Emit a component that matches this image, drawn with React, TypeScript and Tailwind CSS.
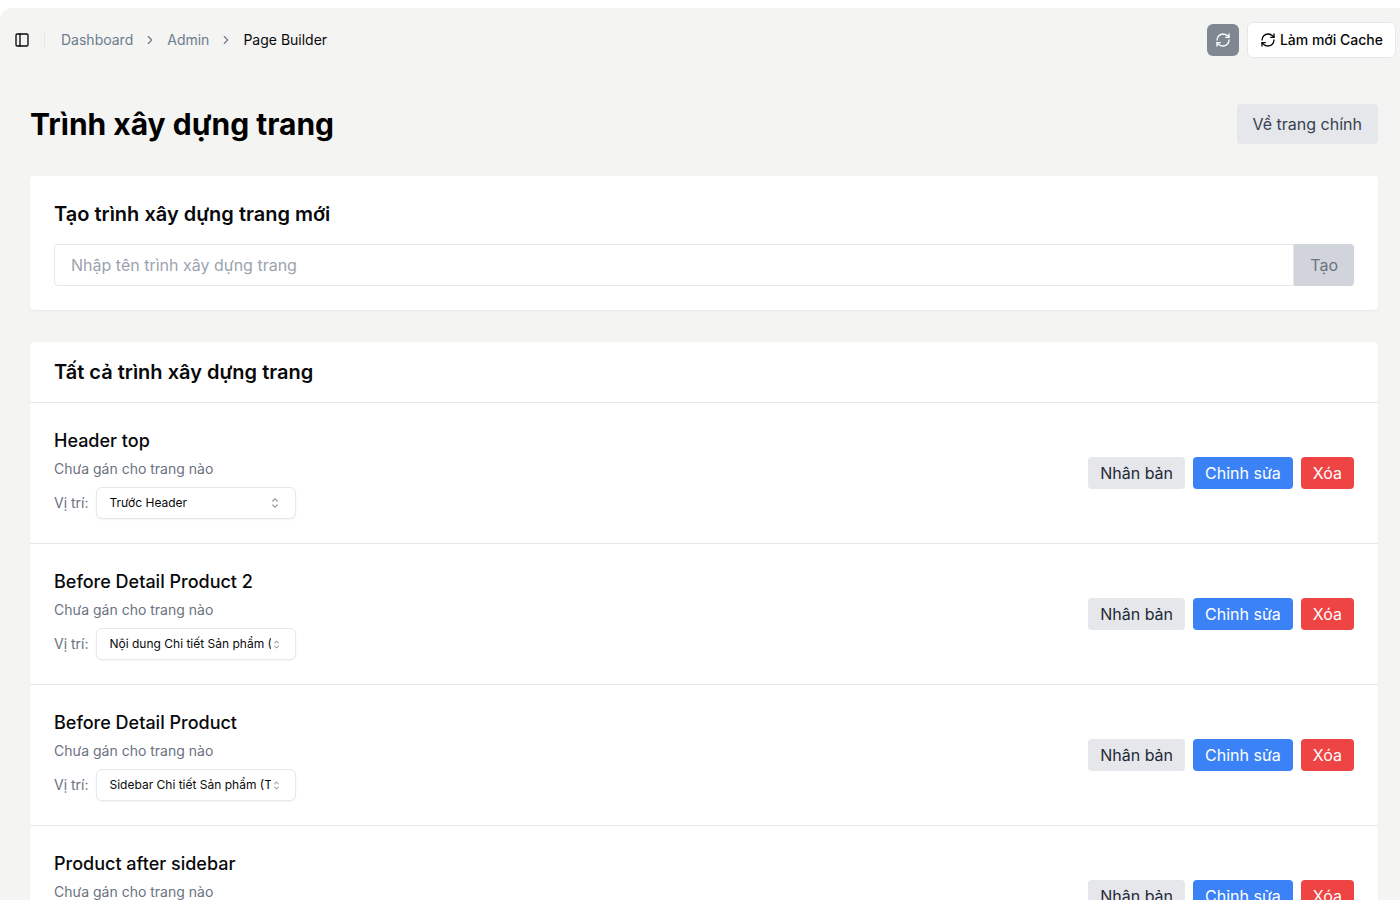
import { useId, useState } from "react";
import { ChevronRight, PanelLeft, RefreshCw } from "lucide-react";
import { RxCaretSort } from "react-icons/rx";

type Builder = { name: string; position: string };

const builders: Builder[] = [
  { name: "Header top", position: "Trước Header" },
  { name: "Before Detail Product 2", position: "Nội dung Chi tiết Sản phẩm (Trên)" },
  { name: "Before Detail Product", position: "Sidebar Chi tiết Sản phẩm (Trên)" },
  { name: "Product after sidebar", position: "Sidebar Chi tiết Sản phẩm (Dưới)" },
];

const positions = [
  "Trước Header",
  "Nội dung Chi tiết Sản phẩm (Trên)",
  "Sidebar Chi tiết Sản phẩm (Trên)",
  "Sidebar Chi tiết Sản phẩm (Dưới)",
];

function TopBar() {
  return (
    <header className="flex h-16 items-center justify-between pr-1 pl-2">
      <div className="flex items-center gap-2">
        <button type="button" aria-label="Thu gọn thanh bên" className="flex size-7 items-center justify-center rounded-md">
          <PanelLeft className="size-4" />
        </button>
        <div className="mr-2 h-4 w-px bg-[#e5e7eb]" />
        <nav aria-label="Breadcrumb">
          <ol className="flex items-center gap-2.5 text-sm text-[#6b7d8f]">
            <li><a href="#dashboard">Dashboard</a></li>
            <li aria-hidden="true"><ChevronRight className="size-3.5" /></li>
            <li><a href="#admin">Admin</a></li>
            <li aria-hidden="true"><ChevronRight className="size-3.5" /></li>
            <li><a href="#page-builder" aria-current="page" className="text-[#09090b]">Page Builder</a></li>
          </ol>
        </nav>
      </div>
      <div className="flex items-center gap-2">
        <button type="button" aria-label="Tải lại" className="flex size-8 items-center justify-center rounded-md bg-[#7f8790] text-white">
          <RefreshCw className="size-4" />
        </button>
        <button type="button" className="flex h-9 items-center gap-1 rounded-md border border-[#e5e7eb] bg-white px-3 text-sm font-medium">
          <RefreshCw className="size-4" />
          Làm mới Cache
        </button>
      </div>
    </header>
  );
}

function CreateForm() {
  const [name, setName] = useState("");
  return (
    <form className="rounded bg-white p-6 shadow-xs" onSubmit={(e) => e.preventDefault()}>
      <h2 className="mb-4 text-xl leading-7 font-semibold">
        <label htmlFor="builder-name">Tạo trình xây dựng trang mới</label>
      </h2>
      <div className="flex">
        <input
          id="builder-name"
          type="text"
          value={name}
          onChange={(e) => setName(e.target.value)}
          placeholder="Nhập tên trình xây dựng trang"
          className="min-w-0 flex-1 rounded-l border border-[#e5e7eb] px-4 py-2 placeholder:text-[#9ca3af]"
        />
        <button type="submit" disabled={!name} className="rounded-r bg-[#d1d5db] px-4 py-2 text-[#6b7280]">
          Tạo
        </button>
      </div>
    </form>
  );
}

function BuilderRow({ name, position }: Builder) {
  const id = useId();
  const [value, setValue] = useState(position);
  const caretSize = value.length > 24 ? "size-[13px]" : "size-4";
  return (
    <li className="flex items-center justify-between border-t border-[#e5e7eb] p-6">
      <div>
        <h3 className="text-lg leading-7 font-medium">{name}</h3>
        <p className="mt-1 text-sm text-[#6b7280]">Chưa gán cho trang nào</p>
        <div className="mt-2 flex items-center gap-2">
          <label htmlFor={id} className="text-sm text-[#6b7280]">Vị trí:</label>
          <div className="relative">
            <select
              id={id}
              value={value}
              onChange={(e) => setValue(e.target.value)}
              className="block h-8 w-50 appearance-none rounded-md border border-[#e5e7eb] bg-white pr-6 pl-3 text-xs shadow-xs"
            >
              {positions.map((p) => (
                <option key={p}>{p}</option>
              ))}
            </select>
            <span className="pointer-events-none absolute inset-y-0 right-[13px] flex items-center">
              <RxCaretSort className={`${caretSize} opacity-50`} />
            </span>
          </div>
        </div>
      </div>
      <div className="flex gap-2">
        <button type="button" className="rounded bg-[#e5e7eb] px-3 py-1 text-[#1f2937]">Nhân bản</button>
        <button type="button" className="rounded bg-[#3b82f6] px-3 py-1 text-white">Chỉnh sửa</button>
        <button type="button" className="rounded bg-[#ef4444] px-3 py-1 text-white">Xóa</button>
      </div>
    </li>
  );
}

export default function App() {
  return (
    <div className="min-h-screen bg-white pt-2 font-[Inter,sans-serif] text-base text-[#09090b]">
      <div className="rounded-tl-xl bg-[#f4f4f2]">
        <TopBar />
        <main className="pt-8 pr-[22px] pb-8 pl-[30px]">
          <div className="mb-8 flex items-center justify-between">
            <h1 className="text-3xl leading-9 font-bold text-black">Trình xây dựng trang</h1>
            <a href="#main" className="rounded bg-[#e5e7eb] px-4 py-2 text-[#374151]">Về trang chính</a>
          </div>
          <CreateForm />
          <section className="mt-8 overflow-hidden rounded bg-white shadow-xs">
            <h2 className="px-6 py-4 text-xl leading-7 font-semibold">Tất cả trình xây dựng trang</h2>
            <ul>
              {builders.map((b) => (
                <BuilderRow key={b.name} {...b} />
              ))}
            </ul>
          </section>
        </main>
      </div>
    </div>
  );
}
